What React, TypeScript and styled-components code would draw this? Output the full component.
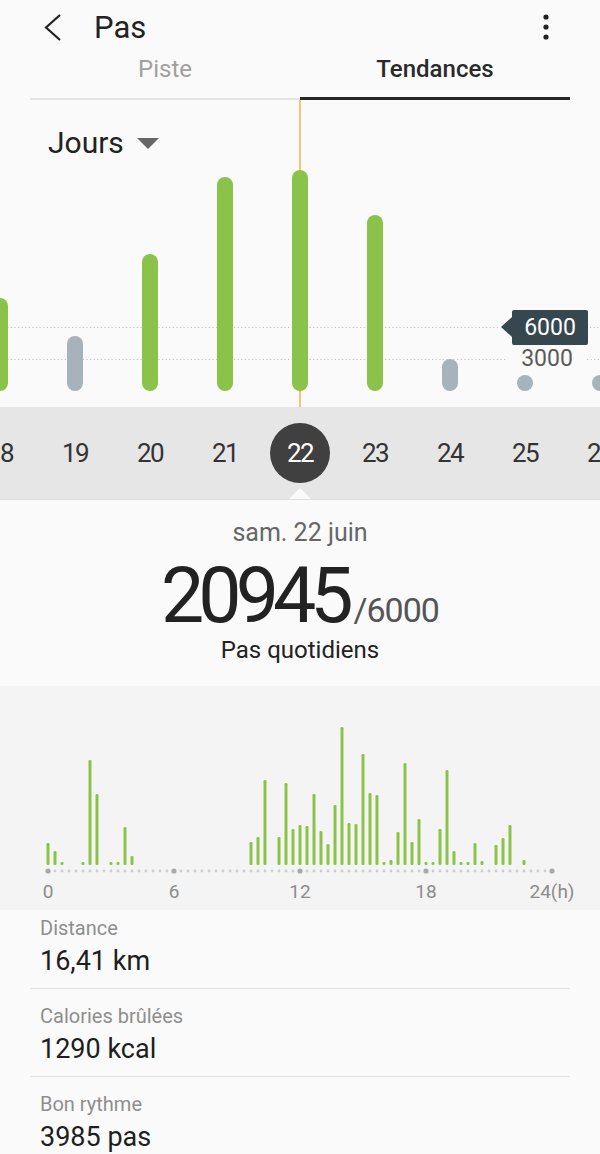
import React from 'react'
import styled, { createGlobalStyle } from 'styled-components'

//// data
const DAYS = [18, 19, 20, 21, 22, 23, 24, 25, 26]
const SELECTED_DAY = 22

// day bars: centre x, top y (relative to chart), met goal or not
const DAY_BARS = [
  { x: 0, top: 198, good: true },
  { x: 75, top: 236, good: false },
  { x: 150, top: 154, good: true },
  { x: 225, top: 77, good: true },
  { x: 300, top: 70, good: true },
  { x: 375, top: 115, good: true },
  { x: 450, top: 259, good: false },
  { x: 525, top: 275, good: false },
  { x: 600, top: 275, good: false },
]

// steps per 20 minute slot, drawn as bar heights
const HOURLY: Record<number, number> = {
  0: 22, 1: 14, 2: 3, 5: 3, 6: 105, 7: 71, 9: 3, 10: 3, 11: 38, 12: 9,
  29: 23, 30: 28, 31: 85, 33: 28, 34: 82, 35: 36, 36: 40, 37: 39, 38: 71,
  39: 34, 40: 21, 41: 60, 42: 138, 43: 42, 44: 41, 45: 111, 46: 72, 47: 70,
  48: 3, 49: 5, 50: 33, 51: 102, 52: 23, 53: 46, 54: 3, 55: 3, 56: 36,
  57: 95, 58: 14, 59: 3, 60: 3, 61: 22, 62: 4, 64: 20, 65: 27, 66: 40, 68: 5,
}

const STATS = [
  { label: 'Distance', value: '16,41 km' },
  { label: 'Calories brûlées', value: '1290 kcal' },
  { label: 'Bon rythme', value: '3985 pas' },
]

//// styles
const GlobalStyle = createGlobalStyle`
  body {
    margin: 0;
    background: #fafafa;
    font-family: Roboto, 'Noto Sans', sans-serif;
    color: #222;
  }
`

const Page = styled.div`
  width: 600px;
  height: 1154px;
  overflow: hidden;
  display: flex;
  flex-direction: column;
  background: #fafafa;
`

const Header = styled.header`
  flex: 0 0 56px;
  display: flex;
  align-items: center;
  padding: 0 49px 0 42px;
`

const IconButton = styled.div`
  display: flex;
  align-items: center;
  justify-content: center;
`

const Title = styled.h1`
  flex: 1 1 auto;
  margin: 0 0 0 28px;
  font-size: 31px;
  font-weight: 400;
  line-height: 56px;
  color: #222;
`

const Tabs = styled.nav`
  flex: 0 0 44px;
  display: flex;
  margin: 0 30px;
`

const Tab = styled.div<{ $active?: boolean }>`
  flex: 1 1 0;
  box-sizing: border-box;
  text-align: center;
  font-size: 24px;
  line-height: 26px;
  font-weight: ${p => (p.$active ? 500 : 400)};
  color: ${p => (p.$active ? '#2a2a2a' : '#a0a0a0')};
  border-bottom: ${p => (p.$active ? '3px solid #262626' : '2px solid #e4e4e4')};
`

const Trend = styled.section`
  flex: 0 0 307px;
  position: relative;
`

const ChartCanvas = styled.svg`
  position: absolute;
  inset: 0;
`

const Dropdown = styled.div`
  position: relative;
  display: inline-flex;
  align-items: center;
  margin: 25px 0 0 48px;
  font-size: 30px;
  line-height: 36px;
  color: #222;
`

const Caret = styled.span`
  width: 0;
  height: 0;
  margin-left: 13px;
  border-left: 11px solid transparent;
  border-right: 11px solid transparent;
  border-top: 11px solid #666;
`

const GoalTag = styled.div`
  position: absolute;
  left: 512px;
  top: 210px;
  width: 76px;
  height: 35px;
  border-radius: 2px;
  background: #37474f;
  color: #fff;
  font-size: 23px;
  line-height: 35px;
  text-align: center;

  &::before {
    content: '';
    position: absolute;
    left: -11px;
    top: 7px;
    border-top: 10px solid transparent;
    border-bottom: 10px solid transparent;
    border-right: 11px solid #37474f;
  }
`

const ScaleLabel = styled.div`
  position: absolute;
  left: 512px;
  top: 246px;
  width: 70px;
  font-size: 23px;
  line-height: 26px;
  text-align: center;
  color: #5a5a5a;
`

const DateStrip = styled.div`
  flex: 0 0 92px;
  display: flex;
  align-items: center;
  overflow: hidden;
  background: #e6e6e6;
  border-bottom: 1px solid #dedede;
`

const DayCell = styled.div<{ $selected?: boolean }>`
  flex: 0 0 75px;
  height: 100%;
  position: relative;
  display: flex;
  align-items: center;
  justify-content: center;
  &:first-child {
    margin-left: -37.5px;
  }

  ${p =>
    p.$selected &&
    `
    &::after {
      content: '';
      position: absolute;
      bottom: 0;
      left: 26.5px;
      border-left: 11px solid transparent;
      border-right: 11px solid transparent;
      border-bottom: 11px solid #fafafa;
    }
  `}
`

const DayNumber = styled.span<{ $selected?: boolean }>`
  width: 60px;
  height: 60px;
  border-radius: 50%;
  display: flex;
  align-items: center;
  justify-content: center;
  font-size: 26px;
  letter-spacing: -1.5px;
  color: ${p => (p.$selected ? '#fff' : '#333')};
  background: ${p => (p.$selected ? '#404040' : 'transparent')};
`

const Summary = styled.section`
  flex: 0 0 186px;
  box-sizing: border-box;
  padding-top: 19px;
  display: flex;
  flex-direction: column;
  align-items: center;
`

const DateLine = styled.div`
  font-size: 25px;
  line-height: 28px;
  color: #666;
`

const CountLine = styled.div`
  margin-top: 9px;
  height: 80px;
  display: flex;
  align-items: baseline;
  justify-content: center;
  white-space: nowrap;
`

const Count = styled.span`
  font-size: 77px;
  line-height: 80px;
  letter-spacing: -6px;
  color: #222;
`

const Goal = styled.span`
  margin-left: 6px;
  font-size: 34px;
  line-height: 40px;
  letter-spacing: -1px;
  color: #555;
`

const Caption = styled.div`
  font-size: 24px;
  line-height: 28px;
  color: #222;
`

const Hourly = styled.section`
  flex: 0 0 224px;
  background: #f4f4f4;
  display: flex;
  flex-direction: column;
`

const AxisLabels = styled.div`
  display: grid;
  grid-template-columns: repeat(5, 126px);
  margin: 5px 0 0 -15px;
`

const AxisLabel = styled.span`
  text-align: center;
  font-size: 19px;
  line-height: 22px;
  color: #8c8c8c;
`

const StatList = styled.section`
  padding: 0 30px;
`

const StatRow = styled.div<{ $first?: boolean }>`
  padding: ${p => (p.$first ? '6px' : '15px')} 10px 10px;
  border-bottom: 1px solid #e2e2e2;
`

const StatLabel = styled.div`
  font-size: 20px;
  line-height: 24px;
  color: #8e8e8e;
`

const StatValue = styled.div`
  margin-top: 4px;
  font-size: 27px;
  line-height: 34px;
  color: #1e1e1e;
`

//// drawings
const BackIcon = () => (
  <svg width="24" height="30" viewBox="0 0 24 30">
    <path d="M18 2 L4 14.5 L18 27" fill="none" stroke="#222" strokeWidth="2.2" />
  </svg>
)

const MoreIcon = () => (
  <svg width="10" height="30" viewBox="0 0 10 30">
    <circle cx="5" cy="4" r="2.6" fill="#222" />
    <circle cx="5" cy="14" r="2.6" fill="#222" />
    <circle cx="5" cy="24" r="2.6" fill="#222" />
  </svg>
)

const GREEN = '#8bc34a'
const GREY = '#a6b3ba'
const BASE = 291

const DayChart = () => (
  <ChartCanvas width="600" height="307" viewBox="0 0 600 307">
    <line x1="300" y1="0" x2="300" y2="307" stroke="#f0b351" strokeWidth="1.5" />
    <g stroke="#c4c4c4" strokeWidth="1" strokeDasharray="1.2 2.4">
      <line x1="0" y1="227.5" x2="500" y2="227.5" />
      <line x1="590" y1="227.5" x2="600" y2="227.5" />
      <line x1="0" y1="259.5" x2="507" y2="259.5" />
      <line x1="587" y1="259.5" x2="600" y2="259.5" />
    </g>
    {DAY_BARS.map(b => (
      <rect
        key={b.x}
        x={b.x - 8}
        y={b.top}
        width="16"
        height={BASE - b.top}
        rx="8"
        fill={b.good ? GREEN : GREY}
      />
    ))}
  </ChartCanvas>
)

const HourlyChart = () => {
  const dots: React.ReactNode[] = []
  for (let i = 0; i <= 72; i++) {
    const major = i % 18 === 0
    dots.push(
      <circle key={i} cx={48 + i * 7} cy="185" r={major ? 2.6 : 1.4} fill={major ? '#a9a9a9' : '#cdcdcd'} />
    )
  }
  return (
    <svg width="600" height="190" viewBox="0 0 600 190">
      {Object.entries(HOURLY).map(([slot, h]) => (
        <rect key={slot} x={48 + Number(slot) * 7 - 1.5} y={179 - h} width="3" height={h} rx="1.2" fill={GREEN} />
      ))}
      {dots}
    </svg>
  )
}

//// page
const App: React.FC = () => (
  <Page>
    <GlobalStyle />
    <Header>
      <IconButton>
        <BackIcon />
      </IconButton>
      <Title>Pas</Title>
      <IconButton>
        <MoreIcon />
      </IconButton>
    </Header>

    <Tabs>
      <Tab>Piste</Tab>
      <Tab $active>Tendances</Tab>
    </Tabs>

    <Trend>
      <DayChart />
      <Dropdown>
        Jours
        <Caret />
      </Dropdown>
      <GoalTag>6000</GoalTag>
      <ScaleLabel>3000</ScaleLabel>
    </Trend>

    <DateStrip>
      {DAYS.map(d => (
        <DayCell key={d} $selected={d === SELECTED_DAY}>
          <DayNumber $selected={d === SELECTED_DAY}>{d}</DayNumber>
        </DayCell>
      ))}
    </DateStrip>

    <Summary>
      <DateLine>sam. 22 juin</DateLine>
      <CountLine>
        <Count>20945</Count>
        <Goal>/6000</Goal>
      </CountLine>
      <Caption>Pas quotidiens</Caption>
    </Summary>

    <Hourly>
      <HourlyChart />
      <AxisLabels>
        {['0', '6', '12', '18', '24(h)'].map(l => (
          <AxisLabel key={l}>{l}</AxisLabel>
        ))}
      </AxisLabels>
    </Hourly>

    <StatList>
      {STATS.map((s, i) => (
        <StatRow key={s.label} $first={i === 0}>
          <StatLabel>{s.label}</StatLabel>
          <StatValue>{s.value}</StatValue>
        </StatRow>
      ))}
    </StatList>
  </Page>
)

export default App
